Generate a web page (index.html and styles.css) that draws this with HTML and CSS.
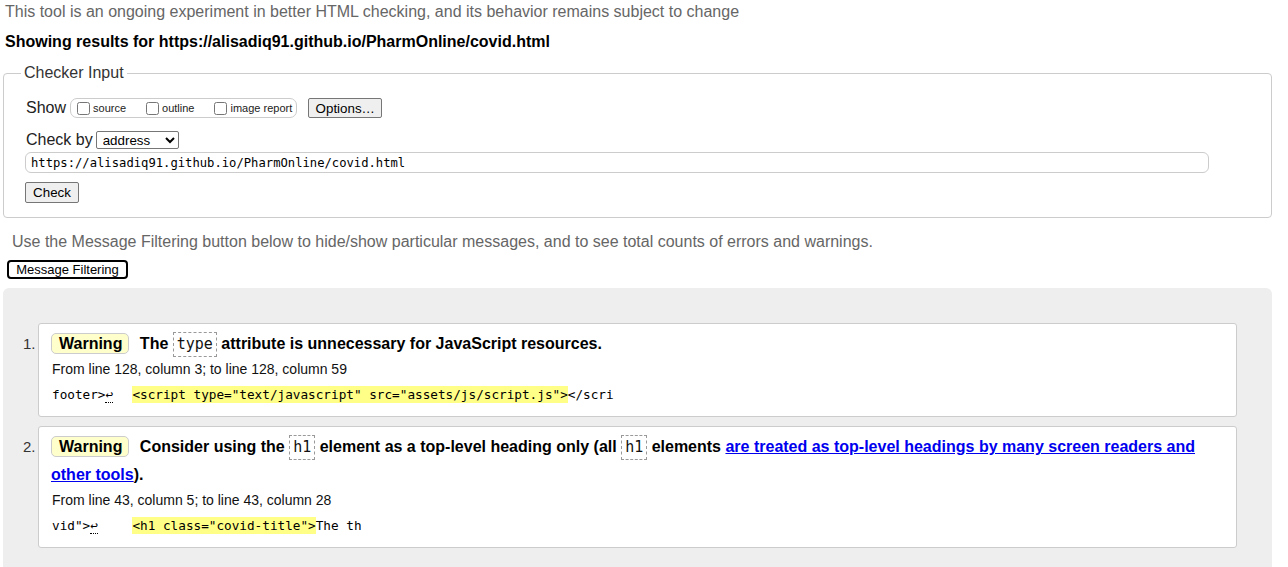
FILE: index.html
```html
<!DOCTYPE html>
<html lang="en">
<head>
<meta charset="utf-8">
<title>Showing results for https://alisadiq91.github.io/PharmOnline/covid.html - Nu Html Checker</title>
<link rel="stylesheet" href="styles.css">
</head>
<body>
<p class="note">This tool is an ongoing experiment in better HTML checking, and its behavior remains subject to change</p>
<p class="showing">Showing results for https://alisadiq91.github.io/PharmOnline/covid.html</p>
<form class="checker">
  <fieldset class="checker-fieldset">
    <legend class="checker-legend">Checker Input</legend>
    <div class="row row-show">
      <span class="row-label">Show</span>
      <span class="show-group">
        <label class="opt"><input type="checkbox" class="cb">source</label>
        <label class="opt"><input type="checkbox" class="cb">outline</label>
        <label class="opt"><input type="checkbox" class="cb">image report</label>
      </span>
      <button type="button" class="btn btn-options">Options…</button>
    </div>
    <div class="row row-checkby">
      <span class="row-label label-checkby">Check by</span>
      <select class="select"><option>address</option></select>
    </div>
    <input class="url" type="text" value="https://alisadiq91.github.io/PharmOnline/covid.html">
    <button type="button" class="btn btn-check">Check</button>
  </fieldset>
</form>
<p class="filter-note">Use the Message Filtering button below to hide/show particular messages, and to see total counts of errors and warnings.</p>
<button type="button" class="btn-filter">Message Filtering</button>
<div class="results">
  <ol class="messages">
    <li class="msg">
      <span class="num">1.</span>
      <div class="card">
        <p class="msg-title"><strong class="badge">Warning</strong> The <code class="kw">type</code> attribute is unnecessary for JavaScript resources.</p>
        <p class="loc">From line 128, column 3; to line 128, column 59</p>
        <p class="extract"><code class="src">footer&gt;<b class="lf">↩</b>  <mark class="hl">&lt;script type="text/javascript" src="assets/js/script.js"&gt;</mark>&lt;/scri</code></p>
      </div>
    </li>
    <li class="msg">
      <span class="num">2.</span>
      <div class="card">
        <p class="msg-title"><strong class="badge">Warning</strong> Consider using the <code class="kw">h1</code> element as a top-level heading only (all <code class="kw">h1</code> elements <a class="link" href="#">are treated as top-level headings by many screen readers and other tools</a>).</p>
        <p class="loc">From line 43, column 5; to line 43, column 28</p>
        <p class="extract"><code class="src">vid"&gt;<b class="lf">↩</b>    <mark class="hl">&lt;h1 class="covid-title"&gt;</mark>The th</code></p>
      </div>
    </li>
  </ol>
</div>
</body>
</html>
```

FILE: styles.css
```css
* {
  box-sizing: border-box;
}

body {
  margin: 0;
  padding: 0 16px 0 3px;
  font-family: "Liberation Sans", Arial, sans-serif;
  font-size: 16px;
  color: #000;
  background: #fff;
}

.note {
  margin: 0;
  padding: 2px 0 0 2px;
  line-height: 20px;
  color: #666;
}

.showing {
  margin: 10px 0 0;
  padding-left: 2px;
  line-height: 20px;
  font-weight: bold;
}

.checker {
  margin: 11px 0 0;
}

.checker-fieldset {
  margin: 0;
  min-width: 0;
  padding: 0 0 14px 17px;
  border: 1px solid #ccc;
  border-radius: 4px;
}

.checker-legend {
  padding: 0 3px;
  line-height: 20px;
  color: #333;
}

.row {
  display: flex;
  align-items: center;
}

.row-label {
  line-height: 20px;
  color: #222;
}

.row-show {
  margin-top: 15px;
  height: 20px;
  padding-left: 5px;
}

.row-show .row-label {
  margin-right: 4px;
}

.show-group {
  display: inline-flex;
  align-items: center;
  height: 20px;
  border: 1px solid #ccc;
  border-radius: 7px;
  padding: 0 4px 0 2px;
  gap: 16px;
  font-size: 11px;
  color: #222;
}

.opt {
  display: inline-flex;
  align-items: center;
}

.cb {
  width: 13px;
  height: 13px;
  margin: 0 3px 0 4px;
}

.btn {
  font-family: "Liberation Sans", Arial, sans-serif;
  font-size: 13.33px;
  color: #000;
  background: #efefef;
  border: 1px solid #767676;
  border-radius: 2px;
  padding: 0;
}

.btn-options {
  margin-left: 11px;
  width: 74px;
  height: 20px;
}

.row-checkby {
  margin-top: 13px;
  height: 18px;
  padding-left: 5px;
}

.label-checkby {
  margin-right: 3px;
}

.select {
  width: 83px;
  height: 18px;
  font-family: "Liberation Sans", Arial, sans-serif;
  font-size: 13.33px;
  padding: 0 0 0 2px;
  border: 1px solid #767676;
  border-radius: 2px;
  background: #fff;
  color: #000;
}

.url {
  display: block;
  margin: 3px 0 0 4px;
  width: 1184px;
  height: 21px;
  padding: 0 5px;
  border: 1px solid #ccc;
  border-radius: 6px;
  font-family: "DejaVu Sans Mono", "Liberation Mono", monospace;
  font-size: 12.2px;
  color: #000;
}

.btn-check {
  display: block;
  margin: 9px 0 0 4px;
  width: 54px;
  height: 21px;
}

.filter-note {
  margin: 14px 0 0;
  padding-left: 9px;
  line-height: 20px;
  color: #666;
}

.btn-filter {
  display: block;
  margin: 8px 0 0 4px;
  width: 121px;
  height: 19px;
  padding: 0;
  border: 2px solid #000;
  border-radius: 4px;
  background: #fff;
  font-family: "Liberation Sans", Arial, sans-serif;
  font-size: 13px;
  line-height: 15px;
  color: #000;
}

.results {
  margin-top: 9px;
  background: #eee;
  border-radius: 6px 6px 0 0;
  padding: 35px 35px 30px 20px;
}

.messages {
  list-style: none;
  margin: 0;
  padding: 0;
}

.msg {
  display: flex;
  margin-bottom: 9px;
}

.num {
  flex: none;
  width: 15px;
  padding-top: 7px;
  line-height: 28px;
  font-size: 15px;
  color: #333;
}

.card {
  flex: 1;
  background: #fff;
  border: 1px solid #ccc;
  border-radius: 3px;
  padding: 6px 10px 7px 12px;
}

.msg-title {
  margin: 0;
  line-height: 28px;
  font-weight: bold;
}

.badge {
  display: inline-block;
  background: #ffc;
  border: 1px solid #ccc;
  border-radius: 5px;
  padding: 0 6px 0 7px;
  line-height: 19px;
  margin-right: 6px;
}

.kw {
  display: inline-block;
  margin: -3px 0;
  font-family: "DejaVu Sans Mono", "Liberation Mono", monospace;
  font-size: 15px;
  font-weight: normal;
  line-height: 19px;
  padding: 2px 3px;
  border: 1px dashed #999;
  vertical-align: middle;
  color: #111;
}

.link {
  color: #00e;
  text-decoration: underline;
}

.loc {
  margin: 0;
  padding-left: 1px;
  font-size: 14px;
  line-height: 22px;
  color: #111;
}

.extract {
  margin: 0;
  padding-left: 1px;
  line-height: 28px;
}

.src {
  white-space: pre;
  font-family: "DejaVu Sans Mono", "Liberation Mono", monospace;
  font-size: 12.7px;
  color: #000;
}

.lf {
  font-weight: normal;
  border-bottom: 1px dotted #000;
  margin-right: 4px;
}

.hl {
  background: #ff8;
  color: #000;
  padding: 1px 0;
}
```
